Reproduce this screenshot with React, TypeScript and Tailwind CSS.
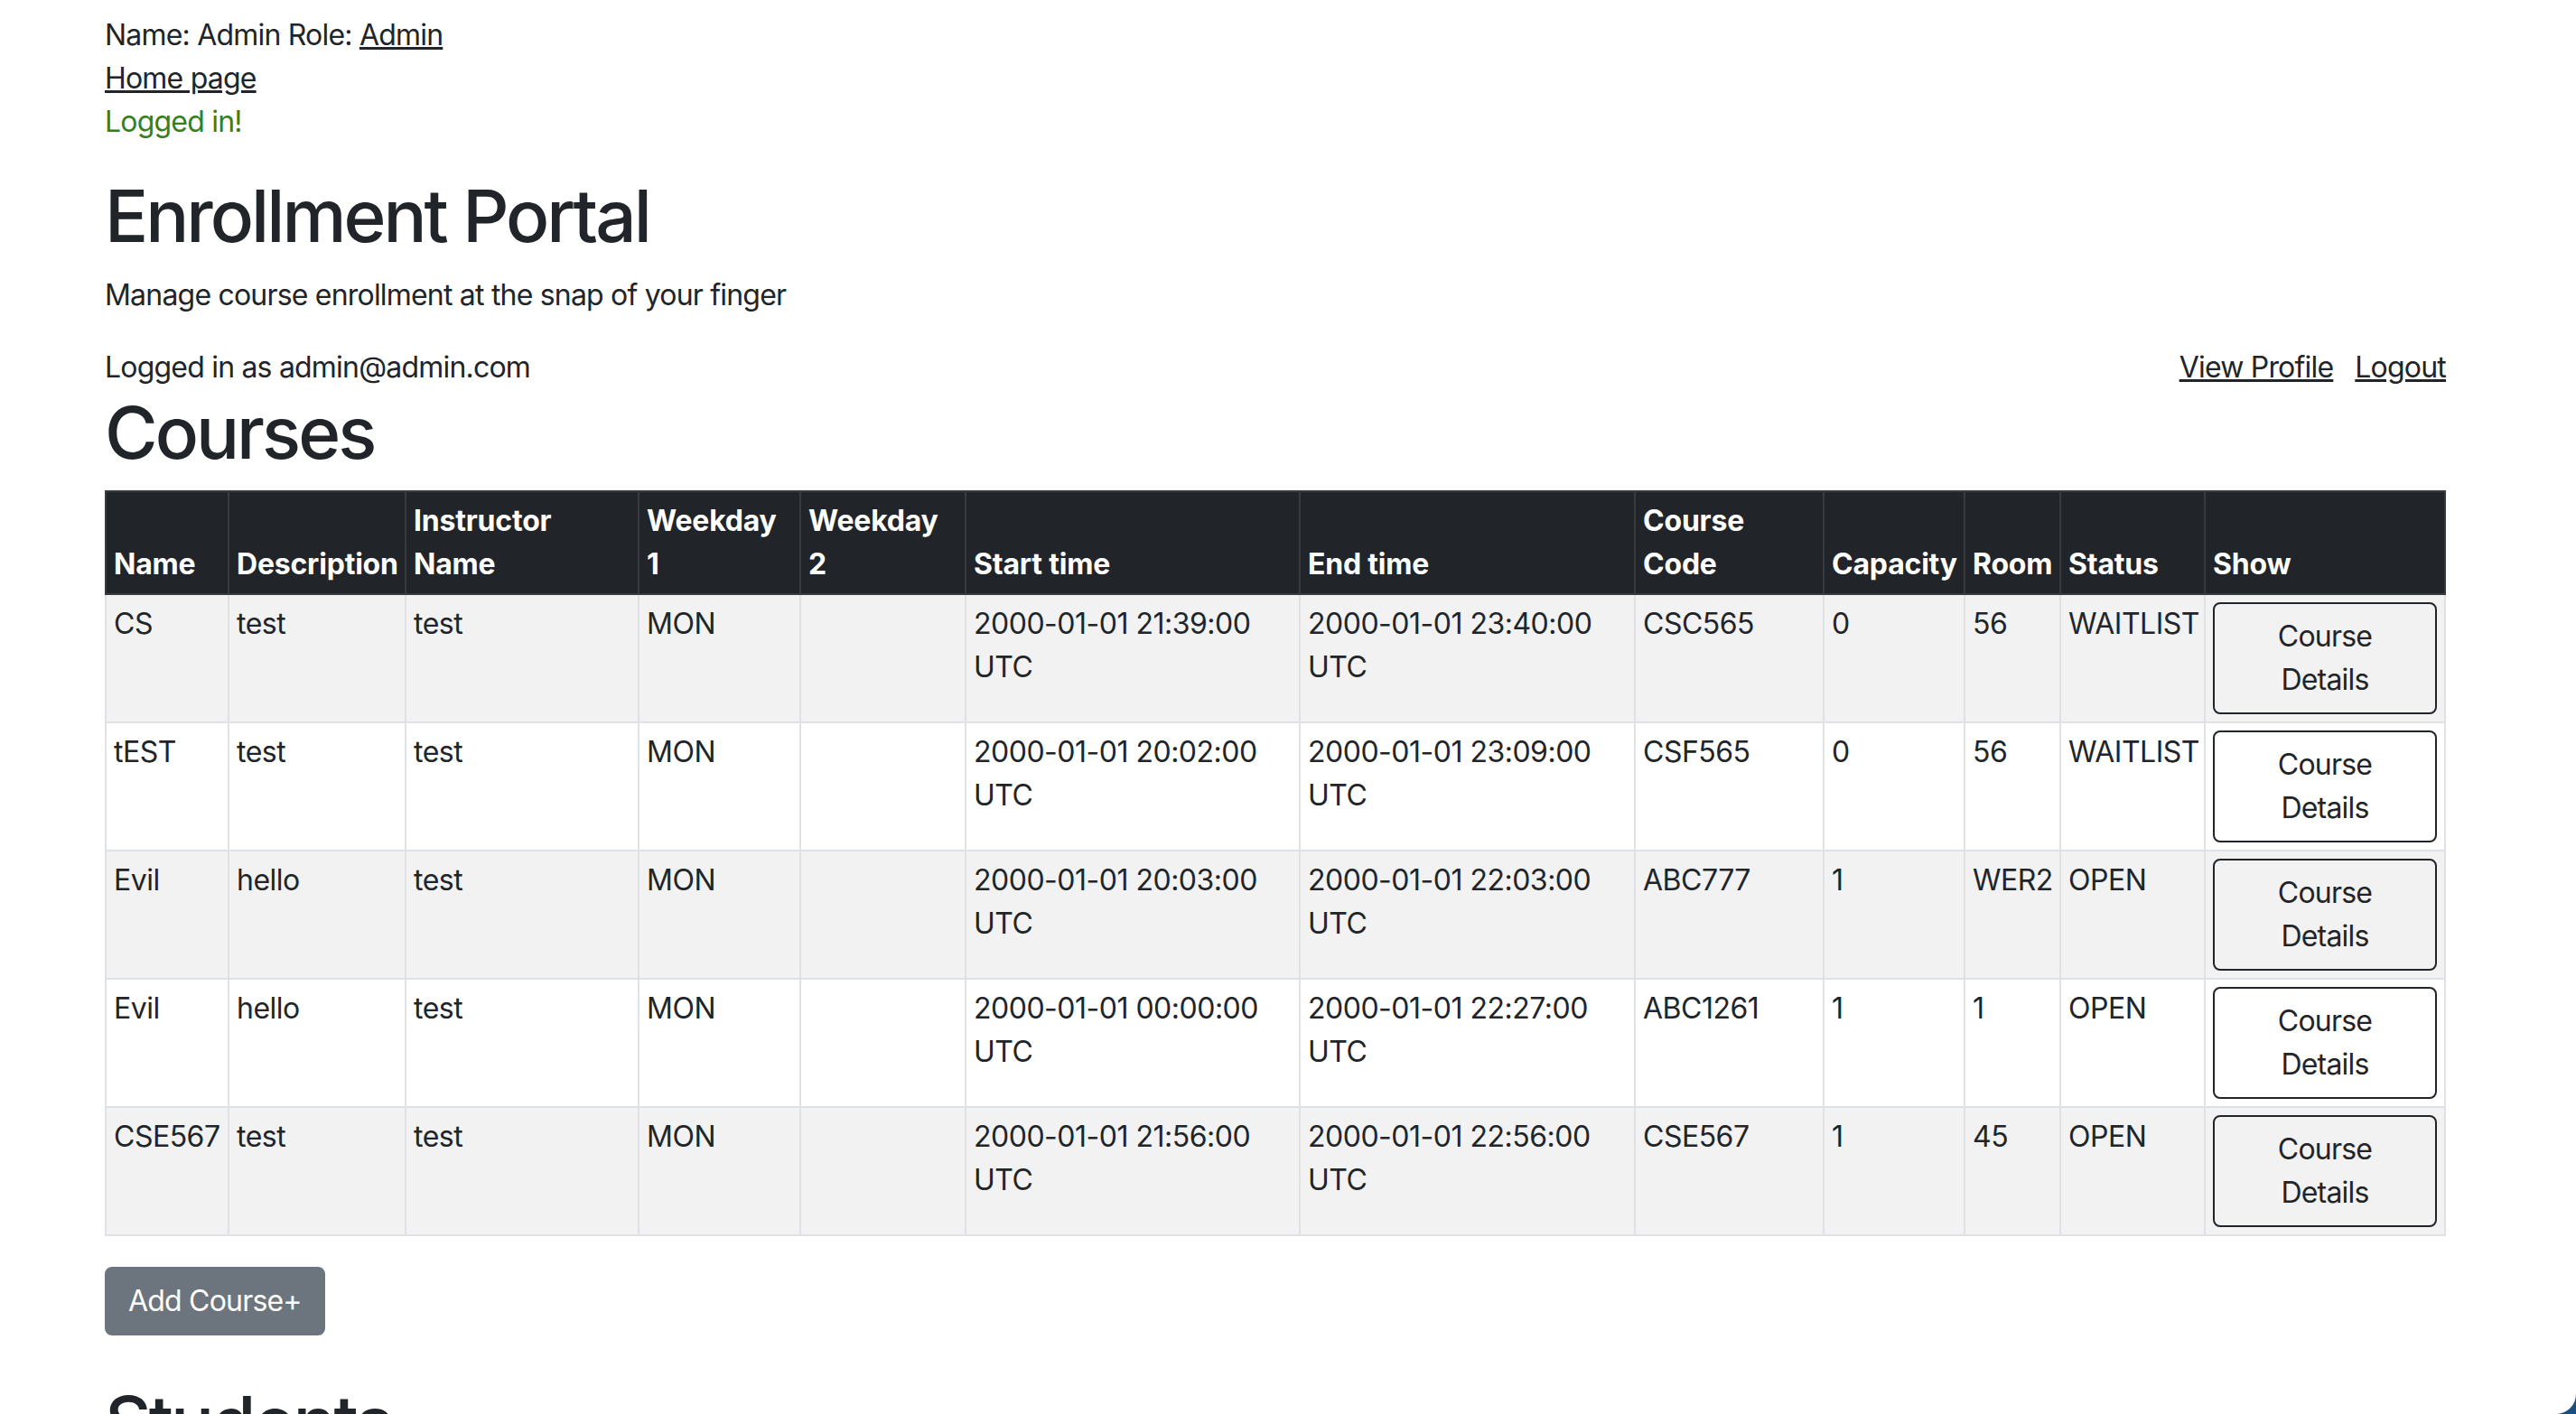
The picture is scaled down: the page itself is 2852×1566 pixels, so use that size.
const courses = [
  { name: "CS", desc: "test", instructor: "test", day1: "MON", day2: "", start: "2000-01-01 21:39:00", end: "2000-01-01 23:40:00", code: "CSC565", capacity: "0", room: "56", status: "WAITLIST" },
  { name: "tEST", desc: "test", instructor: "test", day1: "MON", day2: "", start: "2000-01-01 20:02:00", end: "2000-01-01 23:09:00", code: "CSF565", capacity: "0", room: "56", status: "WAITLIST" },
  { name: "Evil", desc: "hello", instructor: "test", day1: "MON", day2: "", start: "2000-01-01 20:03:00", end: "2000-01-01 22:03:00", code: "ABC777", capacity: "1", room: "WER2", status: "OPEN" },
  { name: "Evil", desc: "hello", instructor: "test", day1: "MON", day2: "", start: "2000-01-01 00:00:00", end: "2000-01-01 22:27:00", code: "ABC1261", capacity: "1", room: "1", status: "OPEN" },
  { name: "CSE567", desc: "test", instructor: "test", day1: "MON", day2: "", start: "2000-01-01 21:56:00", end: "2000-01-01 22:56:00", code: "CSE567", capacity: "1", room: "45", status: "OPEN" },
];

const th = "bg-[#212529] text-white font-bold text-left align-bottom p-[8px] border-t-2 border-b-2 border-r-2 border-[#373b3e] whitespace-nowrap tracking-[-0.2px]";
const td = "align-top p-[8px] border-r-2 border-b-2 border-[#dee2e6] whitespace-nowrap tracking-[-0.5px]";
const heading = "text-[80px] leading-[96px] font-medium tracking-[-3px]";

export default function App() {
  return (
    <div className="h-[1566px] overflow-hidden bg-[#1b4f7e]">
      <div
        className="h-full bg-white rounded-br-[22px] text-[#212529] text-[32px] leading-[48px] pt-[15px] pl-[116px]"
        style={{ fontFamily: "Inter, 'Liberation Sans', sans-serif" }}
      >
        <div className="w-[2592px]">
          <div className="tracking-[-0.8px]">
            <div>
              Name: Admin Role: <a href="#" className="underline">Admin</a>
            </div>
            <div>
              <a href="#" className="underline">Home page</a>
            </div>
            <p className="text-[#377e22] mb-[32px]">Logged in!</p>

            <h1 className={heading + " mb-[16px]"}>Enrollment Portal</h1>
            <p className="mb-[32px]">Manage course enrollment at the snap of your finger</p>

            <div className="flex justify-between">
              <span>Logged in as admin@admin.com</span>
              <div className="flex gap-[24px]">
                <a href="#" className="underline">View Profile</a>
                <a href="#" className="underline">Logout</a>
              </div>
            </div>

            <h1 className={heading + " mb-[16px]"}>Courses</h1>
          </div>

          <table className="w-full table-fixed border-separate border-spacing-0 mb-[34px]">
            <colgroup>
              <col className="w-[138px]" />
              <col className="w-[196px]" />
              <col className="w-[258px]" />
              <col className="w-[179px]" />
              <col className="w-[183px]" />
              <col className="w-[370px]" />
              <col className="w-[371px]" />
              <col className="w-[209px]" />
              <col className="w-[156px]" />
              <col className="w-[106px]" />
              <col className="w-[160px]" />
              <col className="w-[266px]" />
            </colgroup>
            <thead>
              <tr>
                <th className={th + " border-l-2"}>Name</th>
                <th className={th}>Description</th>
                <th className={th}>Instructor<br />Name</th>
                <th className={th}>Weekday<br />1</th>
                <th className={th}>Weekday<br />2</th>
                <th className={th}>Start time</th>
                <th className={th}>End time</th>
                <th className={th}>Course<br />Code</th>
                <th className={th}>Capacity</th>
                <th className={th}>Room</th>
                <th className={th}>Status</th>
                <th className={th}>Show</th>
              </tr>
            </thead>
            <tbody>
              {courses.map((c, i) => (
                <tr key={i} className={i % 2 === 0 ? "bg-[#f2f2f2]" : "bg-white"}>
                  <td className={td + " border-l-2"}>{c.name}</td>
                  <td className={td}>{c.desc}</td>
                  <td className={td}>{c.instructor}</td>
                  <td className={td}>{c.day1}</td>
                  <td className={td}>{c.day2}</td>
                  <td className={td}>{c.start}<br />UTC</td>
                  <td className={td}>{c.end}<br />UTC</td>
                  <td className={td}>{c.code}</td>
                  <td className={td}>{c.capacity}</td>
                  <td className={td}>{c.room}</td>
                  <td className={td}>{c.status}</td>
                  <td className={td}>
                    <button className="w-full border-2 border-[#212529] rounded-[8px] px-[24px] py-[12px] leading-[48px] text-center text-[#212529] tracking-[-0.8px]">
                      Course<br />Details
                    </button>
                  </td>
                </tr>
              ))}
            </tbody>
          </table>

          <button className="bg-[#6c757d] border-2 border-[#6c757d] text-white rounded-[8px] px-[24px] py-[12px] leading-[48px] tracking-[-0.8px]">
            Add Course+
          </button>

          <h1 className={heading + " mt-[48px]"}>Students</h1>
        </div>
      </div>
    </div>
  );
}
